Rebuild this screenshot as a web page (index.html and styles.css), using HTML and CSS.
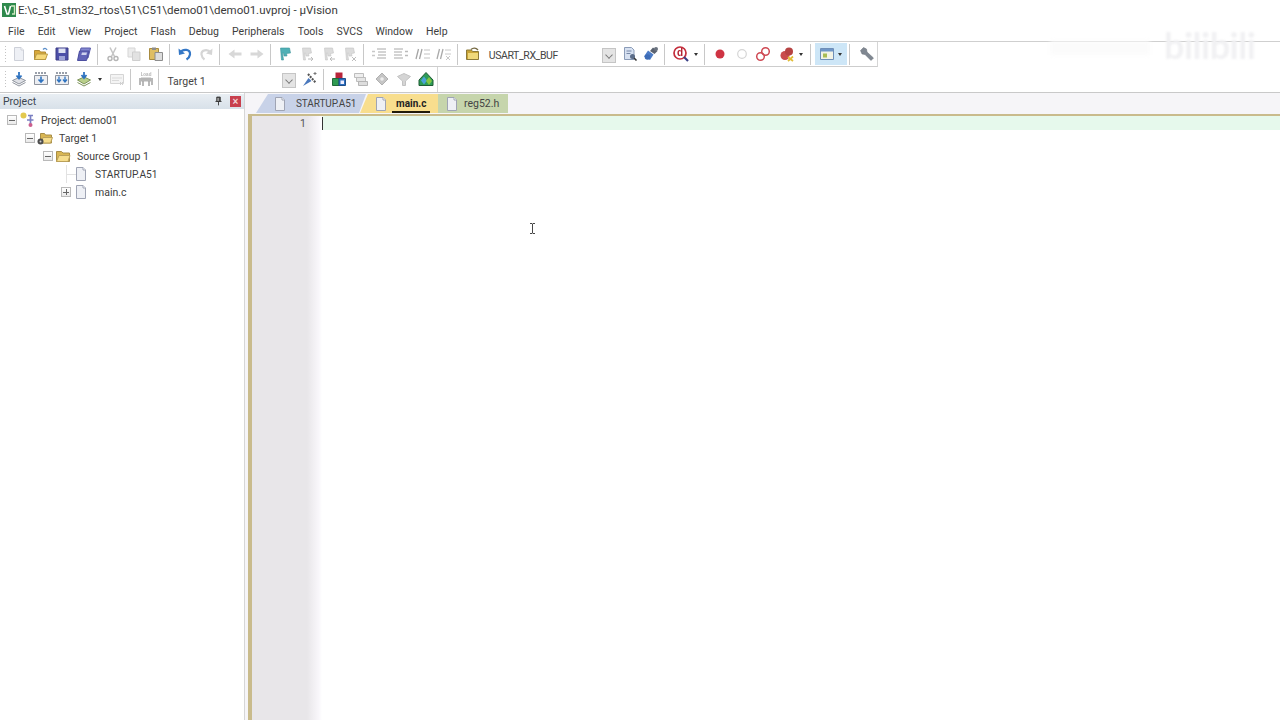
FILE: index.html
```html
<!DOCTYPE html>
<html lang="en">
<head>
<meta charset="utf-8">
<title>demo01 - µVision</title>
<link rel="stylesheet" href="styles.css">
</head>
<body>
<svg class="defs" xmlns="http://www.w3.org/2000/svg">
  <symbol id="doc" viewBox="0 0 16 16"><path d="M3.500 1.500h6.500l2.500 2.500v10.500h-9z" fill="#eef0f5" stroke="currentColor"/><path d="M10 1.500v2.500h2.500" fill="#fff" stroke="currentColor"/></symbol>
  <symbol id="open" viewBox="0 0 16 16"><path d="M1.500 4.500h5l1 1.500h5v7.500h-11z" fill="#d9a93a" stroke="#b08a35"/><path d="M1.500 13.500l2-5.500h11l-2 5.500z" fill="#f6d878" stroke="#b99a45"/><path d="M10 3.500c2-1.800 3.500-1 4 .5" fill="none" stroke="#5b8ec9" stroke-width="1.300"/></symbol>
  <symbol id="save" viewBox="0 0 16 16"><path d="M2 2h12v12H2z" fill="#4c4fa8" stroke="#3c3d86"/><path d="M4.500 2.500h7v4.500h-7z" fill="#dfe2f2"/><path d="M5 10h6v4H5z" fill="#9ea3d8"/></symbol>
  <symbol id="saveall" viewBox="0 0 16 16"><path d="M5 2h9.500l-2.500 10H2.500z" fill="#8387cf" stroke="#5a5cab"/><path d="M3.500 5h9.500l-2.500 9.500H1.500z" fill="#6264b8" stroke="#4d4fa0"/><path d="M6 6.500h5l-.7 2.500h-5z" fill="#cfd2ee"/></symbol>
  <symbol id="cut" viewBox="0 0 16 16"><path d="M5 1.500l4.500 9M11 1.500l-4.500 9" stroke="#c4c4c4" stroke-width="1.500" fill="none"/><circle cx="5" cy="12.500" r="2" fill="none" stroke="#b5b5b5" stroke-width="1.400"/><circle cx="11" cy="12.500" r="2" fill="none" stroke="#b5b5b5" stroke-width="1.400"/></symbol>
  <symbol id="copy" viewBox="0 0 16 16"><path d="M2 2h7v9H2z" fill="#ececec" stroke="#d5d5d5"/><path d="M6.500 6h7.500v8.500H6.500z" fill="#e2e2e2" stroke="#cfcfcf"/></symbol>
  <symbol id="paste" viewBox="0 0 16 16"><path d="M1.500 2.500h9v11h-9z" fill="#dfbe63" stroke="#a88b3f"/><path d="M4 1.500h4v2.500H4z" fill="#8c8c8c"/><path d="M7 6.500h7.500v8H7z" fill="#ddd" stroke="#8d8d8d"/></symbol>
  <symbol id="undo" viewBox="0 0 16 16"><path d="M3.500 6.500C6 2.500 13.500 3 13 8.500c-.3 2.500-2 4-3.500 5" fill="none" stroke="#3477c6" stroke-width="2.200"/><path d="M1.500 2.500l.5 6.500 6-1.500z" fill="#3477c6"/></symbol>
  <symbol id="redo" viewBox="0 0 16 16"><path d="M12.500 6.500C10 3 3 3.500 3.500 8.500c.3 2.500 1.500 4 3 5" fill="none" stroke="#d5d5d5" stroke-width="2.200"/><path d="M14.500 2.500l-.5 6.500-6-1.500z" fill="#d5d5d5"/></symbol>
  <symbol id="back" viewBox="0 0 16 16"><path d="M1.500 8l6-4.500v3h7v3h-7v3z" fill="#d8d8d8"/></symbol>
  <symbol id="fwd" viewBox="0 0 16 16"><path d="M14.500 8l-6-4.500v3h-7v3h7v3z" fill="#d8d8d8"/></symbol>
  <symbol id="flag" viewBox="0 0 16 16"><path d="M3.500 2h9l1 5-4 .5.500 2.500H7l-.5-3H5.500l1 7h-2z" fill="#4fb0b6" stroke="#3e949a" stroke-width=".6"/></symbol>
  <symbol id="flag1" viewBox="0 0 16 16"><path d="M3.500 2h8l1 5-3 .5.500 2.500H7l-.5-3H5.500l1 7h-2z" fill="#dcdcdc" stroke="#c4c4c4" stroke-width=".6"/><path d="M9 13h5M12 11l2 2-2 2" stroke="#bcbcbc" fill="none"/></symbol>
  <symbol id="flag2" viewBox="0 0 16 16"><path d="M3.500 2h8l1 5-3 .5.500 2.500H7l-.5-3H5.500l1 7h-2z" fill="#dcdcdc" stroke="#c4c4c4" stroke-width=".6"/><path d="M14 13H9M11 11l-2 2 2 2" stroke="#bcbcbc" fill="none"/></symbol>
  <symbol id="flag3" viewBox="0 0 16 16"><path d="M3.500 2h8l1 5-3 .5.500 2.500H7l-.5-3H5.500l1 7h-2z" fill="#dcdcdc" stroke="#c4c4c4" stroke-width=".6"/><path d="M10 11l4 4M14 11l-4 4" stroke="#bcbcbc" fill="none"/></symbol>
  <symbol id="indent" viewBox="0 0 16 16"><path d="M6 3h9M7 6h8M7 9h8M6 12h9" stroke="#a8a8a8"/><path d="M1 5.500h3M1 9.500h3" stroke="#c8c8c8" stroke-width="1.500"/></symbol>
  <symbol id="outdent" viewBox="0 0 16 16"><path d="M1 3h9M1 6h8M1 9h8M1 12h9" stroke="#a8a8a8"/><path d="M12 5.500h3M12 9.500h3" stroke="#bbb" stroke-width="1.500"/></symbol>
  <symbol id="comment" viewBox="0 0 16 16"><path d="M3.500 3L1 13M7 3L4.500 13" stroke="#a5a5a5" stroke-width="1.300"/><path d="M9 4h6M9 8h6M9 12h6" stroke="#c2c2c2"/></symbol>
  <symbol id="uncomment" viewBox="0 0 16 16"><path d="M3.500 3L1 13M7 3L4.500 13" stroke="#aaa" stroke-width="1.300"/><path d="M9 4h6M9 8h6" stroke="#c8c8c8"/><path d="M10 10l4 4M14 10l-4 4" stroke="#c8c8c8"/></symbol>
  <symbol id="findfile" viewBox="0 0 16 16"><path d="M1.500 4h5l1 1.500h6v8h-12z" fill="#c9a437" stroke="#8c7a3a"/><path d="M6 3.500c2-2 5-2 7 .5" fill="none" stroke="#776b45" stroke-width="1.300"/><path d="M3 7h10v6H3z" fill="#efd87b"/></symbol>
  <symbol id="finddoc" viewBox="0 0 16 16"><path d="M2.500 1.500h7l2.500 2.500v9.500h-9.500z" fill="#d7e1f1" stroke="#8b9cb8"/><path d="M4.500 5h5M4.500 7.500h4" stroke="#7687a7"/><circle cx="10.500" cy="10.500" r="2.500" fill="#5c6d89"/><path d="M12 12l2.500 2.500" stroke="#333" stroke-width="1.600"/></symbol>
  <symbol id="binoc" viewBox="0 0 16 16"><path d="M1 10.500l4-6 5.500 4-3.500 5.500z" fill="#4c7cc7"/><path d="M7 5l3-3.500 4.500 3.500-3 3z" fill="#5a6270"/><circle cx="4.500" cy="11" r="2.800" fill="#3d6cb6"/><circle cx="13" cy="3" r="2" fill="#6a727f"/></symbol>
  <symbol id="debug" viewBox="0 0 16 16"><circle cx="7" cy="7" r="6" fill="#fff" stroke="#c42c3b" stroke-width="1.700"/><text class="dglyph" x="7" y="10" text-anchor="middle">d</text><path d="M11 11l4 4" stroke="#3a3f86" stroke-width="2.200"/></symbol>
  <symbol id="bp" viewBox="0 0 16 16"><circle cx="8" cy="8" r="4.500" fill="#cf3443"/></symbol>
  <symbol id="bpoff" viewBox="0 0 16 16"><circle cx="8" cy="8" r="4.300" fill="#fff" stroke="#d5d5d5" stroke-width="1.200"/></symbol>
  <symbol id="bpring" viewBox="0 0 16 16"><circle cx="5.500" cy="10.500" r="3.800" fill="none" stroke="#cf4a54" stroke-width="1.500"/><circle cx="10.500" cy="5.500" r="3.800" fill="none" stroke="#cf4a54" stroke-width="1.500"/></symbol>
  <symbol id="bpx" viewBox="0 0 16 16"><circle cx="6" cy="9.500" r="4.500" fill="#c94c4c"/><circle cx="10" cy="5.500" r="4" fill="#b64343"/><path d="M9 11l5 4M14 10.500l-5 4.500" stroke="#e2bd36" stroke-width="1.700"/></symbol>
  <symbol id="win" viewBox="0 0 16 16"><path d="M1.500 2.500h13v11h-13z" fill="#f2f3e6" stroke="#6f8fb8"/><path d="M2 3h12v2.500H2z" fill="#6f96c8"/><path d="M4 7.500h4v4H4z" fill="#a9bd55"/></symbol>
  <symbol id="wrench" viewBox="0 0 16 16"><path d="M1.500 4.500L4.500 1.500 7.500 3l.5 3 6.500 6-2.500 2.500L6 8.500 3 8z" fill="#7f8791" stroke="#666d77" stroke-width=".5"/></symbol>
  <symbol id="t-trans" viewBox="0 0 16 16"><path d="M1.500 9.500l6.500-3 6.500 3-6.500 3.500z" fill="#dfe1e6" stroke="#8f949e"/><path d="M1.500 11.500l6.500 3.500 6.500-3.500" fill="none" stroke="#8f949e"/><path d="M8 1v6M5.500 4.500L8 7.500l2.500-3" fill="none" stroke="#2f73c0" stroke-width="1.800"/></symbol>
  <symbol id="t-build" viewBox="0 0 16 16"><path d="M1.500 4.500h13v9h-13z" fill="#eceef2" stroke="#8f949e"/><path d="M2 2h12" stroke="#9aa0aa" stroke-dasharray="2 1" stroke-width="2"/><path d="M8 5.500v5M5.500 8.500L8 11l2.500-2.500" fill="none" stroke="#2f73c0" stroke-width="1.600"/></symbol>
  <symbol id="t-rebuild" viewBox="0 0 16 16"><path d="M1.500 4.500h13v9h-13z" fill="#eceef2" stroke="#8f949e"/><path d="M2 2h12" stroke="#9aa0aa" stroke-dasharray="2 1" stroke-width="2"/><path d="M5 5.500v5M3 8.500L5 11l2-2.500M11 5.500v5M9 8.500l2 2.500 2-2.500" fill="none" stroke="#2f73c0" stroke-width="1.300"/></symbol>
  <symbol id="t-batch" viewBox="0 0 16 16"><path d="M1.500 9l6.500-3 6.500 3-6.500 4z" fill="#b9cf8a" stroke="#7c9259"/><path d="M1.500 11.500l6.500 3.500 6.500-3.500" fill="none" stroke="#7c9259"/><path d="M8 1v5.500M5.500 4L8 7l2.500-3" fill="none" stroke="#2f73c0" stroke-width="1.800"/></symbol>
  <symbol id="t-stop" viewBox="0 0 16 16"><path d="M1.500 3.500h13v9h-13z" fill="#f4f4f4" stroke="#d5d5d5"/><path d="M3 7h10M3 9.500h7" stroke="#dadada"/><path d="M11 11l3 3M14 11l-3 3" stroke="#cfcfcf"/></symbol>
  <symbol id="t-load" viewBox="0 0 16 16"><text class="loadglyph" x="8" y="4.500" text-anchor="middle">Load</text><path d="M3 6.500h10v4H3z" fill="#b5b5b5"/><path d="M2 7v7M5 10v5M11 10v5M14 7v7" stroke="#a8a8a8" stroke-width="1.600"/></symbol>
  <symbol id="wand" viewBox="0 0 16 16"><path d="M1 15l5.500-8 3 3z" fill="#4a78bd"/><path d="M6 3l8 9" stroke="#555" stroke-width="2" stroke-dasharray="2 1"/><path d="M13 1v3M11.500 2.500h3" stroke="#777"/></symbol>
  <symbol id="manage" viewBox="0 0 16 16"><path d="M4.500 1.500h7v6h-7z" fill="#b8243a"/><path d="M1.500 7.500h6.500v7h-6.500z" fill="#2f9a51" stroke="#1f6a38"/><path d="M8 7.500h6.500v7H8z" fill="#2d6fbf" stroke="#1f4f8a"/><path d="M9.500 9.500h3.500v3.500H9.500z" fill="#eef"/></symbol>
  <symbol id="rows" viewBox="0 0 16 16"><path d="M1.500 2.500h9v4h-9z" fill="#eee" stroke="#bdbdbd"/><path d="M3.500 6.500h9v4h-9z" fill="#e5e5e5" stroke="#bdbdbd"/><path d="M5.500 10.500h9v4h-9z" fill="#ddd" stroke="#b5b5b5"/></symbol>
  <symbol id="diamond" viewBox="0 0 16 16"><path d="M8 2l6 6-6 6-6-6z" fill="#c5c5c5" stroke="#b0b0b0"/><circle cx="8" cy="8" r="1.800" fill="#eee"/></symbol>
  <symbol id="funnel" viewBox="0 0 16 16"><path d="M1.500 5.500L8 2.500l6.500 3L9.500 10v4.500h-3V10z" fill="#d5d5d5" stroke="#c2c2c2"/></symbol>
  <symbol id="packs" viewBox="0 0 16 16"><path d="M1 9L8 1.500 15 9v5.500H1z" fill="#2d9c58" stroke="#1e5a33"/><path d="M3 9.500L6 5.500l3 4-3 4z" fill="#4aa3d9"/><path d="M8 10l3-4 3 4-3 4z" fill="#85c843"/></symbol>
  <symbol id="projico" viewBox="0 0 16 16"><circle cx="4.500" cy="3.500" r="3" fill="#e3c94e"/><path d="M9 3.500h5M11.500 3.500v9.500M8 8h6.500" stroke="#7a7fc2" stroke-width="1.700" fill="none"/><circle cx="11.500" cy="13" r="2" fill="#cc5f8d"/></symbol>
  <symbol id="folder" viewBox="0 0 16 16"><path d="M1.500 3.500h5l1.500 1.500h6.500v8.500h-13z" fill="#d9b653" stroke="#a88d46"/><path d="M1.500 13.500l2.500-6h11l-2 6z" fill="#f6dd8c" stroke="#bba15a"/></symbol>
  <symbol id="target" viewBox="0 0 16 16"><path d="M3.500 3.500h4l1 1.500h6v8h-11z" fill="#d9b653" stroke="#a88d46"/><path d="M4 13l2-5.500h9.500L13.500 13z" fill="#f6dd8c" stroke="#bba15a"/><circle cx="3.500" cy="11.500" r="3" fill="#4d4d4d"/><circle cx="3.500" cy="11.500" r="1" fill="#ccc"/></symbol>
</svg>

<div class="watermark"><span class="wm-faint"></span><span class="wm-logo">bilibili</span></div>
<svg class="ibeam" viewBox="0 0 7 11" aria-hidden="true"><path d="M1 .5h2l.5.5.5-.5h2M3.500 1v9M1 10.500h2l.5-.5.5.5h2" fill="none" stroke="#333" stroke-width=".9"/></svg>

<header class="titlebar">
  <svg class="appicon" viewBox="0 0 14 14"><path d="M0 0h14v14H0z" fill="#2f8a4d"/><path d="M2.500 3l2.500 8h1.500L8.500 3" fill="none" stroke="#fff" stroke-width="1.600"/><path d="M9 3h3.500v8H10" fill="none" stroke="#cfe8c0" stroke-width="1.400"/></svg>
  <span class="title">E:\c_51_stm32_rtos\51\C51\demo01\demo01.uvproj - µVision</span>
</header>

<nav class="menubar">
  <span>File</span><span>Edit</span><span>View</span><span>Project</span><span>Flash</span><span>Debug</span><span>Peripherals</span><span>Tools</span><span>SVCS</span><span>Window</span><span>Help</span>
</nav>

<div class="tools">
  <div class="toolbar tb-1">
    <i class="grip"></i>
    <b class="t"><svg><use href="#doc"/></svg></b><b class="t"><svg><use href="#open"/></svg></b><b class="t"><svg><use href="#save"/></svg></b><b class="t"><svg><use href="#saveall"/></svg></b><i class="sep"></i>
    <b class="t"><svg><use href="#cut"/></svg></b><b class="t"><svg><use href="#copy"/></svg></b><b class="t"><svg><use href="#paste"/></svg></b><i class="sep"></i>
    <b class="t"><svg><use href="#undo"/></svg></b><b class="t"><svg><use href="#redo"/></svg></b><i class="sep"></i>
    <b class="t"><svg><use href="#back"/></svg></b><b class="t"><svg><use href="#fwd"/></svg></b><i class="sep"></i>
    <b class="t"><svg><use href="#flag"/></svg></b><b class="t"><svg><use href="#flag1"/></svg></b><b class="t"><svg><use href="#flag2"/></svg></b><b class="t"><svg><use href="#flag3"/></svg></b><i class="sep"></i>
    <b class="t"><svg><use href="#indent"/></svg></b><b class="t"><svg><use href="#outdent"/></svg></b><b class="t"><svg><use href="#comment"/></svg></b><b class="t"><svg><use href="#uncomment"/></svg></b><i class="sep"></i>
    <b class="t"><svg><use href="#findfile"/></svg></b>
    <span class="combo combo-find"><span class="combo-text caps">USART_RX_BUF</span><i class="combo-btn"></i></span>
    <b class="t"><svg><use href="#finddoc"/></svg></b><b class="t"><svg><use href="#binoc"/></svg></b><i class="sep"></i>
    <b class="t drop drop-debug"><svg><use href="#debug"/></svg><i class="caret"></i></b><i class="sep"></i>
    <b class="t"><svg><use href="#bp"/></svg></b><b class="t"><svg><use href="#bpoff"/></svg></b><b class="t"><svg><use href="#bpring"/></svg></b>
    <b class="t drop"><svg><use href="#bpx"/></svg><i class="caret"></i></b><i class="sep"></i>
    <b class="t drop active"><svg><use href="#win"/></svg><i class="caret"></i></b><i class="sep sep-last"></i>
    <b class="t"><svg><use href="#wrench"/></svg></b>
  </div>
  <div class="toolbar tb-2">
    <i class="grip"></i>
    <b class="t"><svg><use href="#t-trans"/></svg></b><b class="t"><svg><use href="#t-build"/></svg></b><b class="t"><svg><use href="#t-rebuild"/></svg></b>
    <b class="t drop-sm"><svg><use href="#t-batch"/></svg><i class="caret"></i></b>
    <b class="t"><svg><use href="#t-stop"/></svg></b><i class="sep"></i>
    <b class="t"><svg><use href="#t-load"/></svg></b><i class="sep"></i>
    <span class="combo combo-target"><span class="combo-text">Target 1</span><i class="combo-btn"></i></span>
    <b class="t"><svg><use href="#wand"/></svg></b><i class="sep"></i>
    <b class="t"><svg><use href="#manage"/></svg></b><b class="t"><svg><use href="#rows"/></svg></b><b class="t"><svg><use href="#diamond"/></svg></b><b class="t"><svg><use href="#funnel"/></svg></b><b class="t"><svg><use href="#packs"/></svg></b>
  </div>
</div>

<main class="workspace">
  <aside class="panel">
    <div class="panel-head">
      <span class="panel-title">Project</span>
      <svg class="pin" viewBox="0 0 8 10"><path d="M2 .5h4v5H2zM.5 5.500h7M4 6v4" fill="#555" stroke="#333"/><path d="M3 1.500h1v3.500H3z" fill="#ddd"/></svg>
      <span class="close">×</span>
    </div>
    <ul class="tree">
      <li class="row l0"><i class="exp minus"></i><svg class="ti"><use href="#projico"/></svg><span>Project: demo01</span></li>
      <li class="row l1"><i class="exp minus"></i><svg class="ti"><use href="#target"/></svg><span>Target 1</span></li>
      <li class="row l2"><i class="exp minus"></i><svg class="ti"><use href="#folder"/></svg><span>Source Group 1</span></li>
      <li class="row l3"><i class="exp none"></i><svg class="ti"><use href="#doc"/></svg><span class="caps-tree">STARTUP.A51</span></li>
      <li class="row l3"><i class="exp plus"></i><svg class="ti"><use href="#doc"/></svg><span>main.c</span></li>
    </ul>
  </aside>
  <section class="editor">
    <div class="tabs">
      <div class="tab tab-blue"><svg><use href="#doc"/></svg><span class="caps-tab">STARTUP.A51</span></div>
      <div class="tab tab-yellow"><svg><use href="#doc"/></svg><span class="current">main.c</span></div>
      <div class="tab tab-green"><svg><use href="#doc"/></svg><span>reg52.h</span></div>
    </div>
    <div class="code">
      <div class="gutter"><span class="lineno">1</span></div>
      <div class="lines"><div class="line-current"><i class="cursor"></i></div></div>
    </div>
  </section>
</main>
</body>
</html>
```
FILE: styles.css
```css
* { box-sizing: border-box; }
html, body { margin: 0; height: 720px; overflow: hidden; }
body {
  background: #fff;
  color: #333;
  font-family: Roboto, "Liberation Sans", sans-serif;
  font-size: 10.5px;
  display: flex;
  flex-direction: column;
  position: relative;
}
.defs { display: none; }
.dglyph { font: bold 10px "Liberation Sans", sans-serif; fill: #b3202f; }
.loadglyph { font: bold 4.5px "Liberation Sans", sans-serif; fill: #b5b5b5; }
.caps { letter-spacing: -.4px; }
.caps-tree { font-size: 10.2px; }
.caps-tab { font-size: 10px; letter-spacing: -.1px; }

.titlebar { height: 21px; display: flex; align-items: center; padding: 0 0 1px 2px; flex: none; }
.appicon { width: 14px; height: 14px; margin-right: 2px; }
.title { font-size: 11.5px; color: #3a3a3a; white-space: nowrap; }

.menubar { height: 20px; display: flex; align-items: center; padding-left: 1.5px; flex: none; }
.menubar span { padding: 0 6.55px; color: #3d3d3d; }

.tools { flex: none; border-top: 1px solid #cfcfcf; border-bottom: 1px solid #c9c9c9; height: 52px; display: flex; flex-direction: column; }
.toolbar { display: flex; align-items: center; height: 25px; border-bottom: 1px solid #cdcdcd; border-right: 1px solid #d5d5d5; padding-left: 4px; }
.tb-1 { width: 878px; }
.tb-2 { width: 438px; border-bottom: 0; padding-bottom: 1px; }
.grip { width: 4px; height: 19px; background-image: radial-gradient(#c4c4c4 40%, transparent 45%); background-size: 3px 3px; flex: none; }
.t { flex: none; width: 21.7px; height: 22px; display: flex; align-items: center; justify-content: center; position: relative; font-weight: normal; color: #cdd0d8; }
.t svg { width: 16px; height: 16px; filter: blur(.25px); }
.sep { flex: none; width: 7px; height: 21px; position: relative; }
.sep::after { content: ""; position: absolute; left: 2px; top: 0; bottom: 0; width: 1px; background: #c8c8c8; }
.sep-last { width: 9px; }
.drop { width: 34px; justify-content: flex-start; padding-left: 5px; }
.drop-debug { width: 33px; padding-left: 4px; }
.drop-debug .caret { right: 4px; }
.drop-sm { width: 33px; justify-content: flex-start; padding-left: 3px; }
.drop-sm .caret { right: 4px; }
.caret { position: absolute; right: 5px; top: 10px; border: 2.5px solid transparent; border-top: 3px solid #333; border-bottom: 0; }
.active { background: #cde6f7; width: 32px; padding-left: 4px; }
.combo { flex: none; height: 20px; display: flex; align-items: center; justify-content: space-between; color: #444; }
.combo-find { width: 135px; padding-left: 5px; padding-right: 3px; }
.combo-target { width: 136px; padding-left: 4px; padding-right: 3px; }
.combo-text { white-space: nowrap; padding-top: 2px; }
.combo-target .combo-text { padding-top: 4px; }
.combo-btn { width: 14px; height: 15px; margin-top: 2px; background: #e4e4e4; border: 1px solid #c5c5c5; position: relative; }
.combo-btn::after { content: ""; position: absolute; left: 3px; top: 3px; width: 5px; height: 5px; border-right: 1px solid #777; border-bottom: 1px solid #777; transform: rotate(45deg) scale(.9); }

.workspace { flex: 1; display: flex; min-height: 0; background: #f6f5f8; }
.panel { width: 245px; flex: none; background: #fff; border-right: 1px solid #d6d6d6; padding-top: 1px; display: flex; flex-direction: column; }
.panel-head { height: 15px; background: linear-gradient(#e9eef3, #d8e1e9); display: flex; align-items: center; padding: 0 3px 1px; flex: none; }
.panel-title { flex: 1; color: #3c4650; }
.pin { width: 7px; height: 10px; margin-right: 8px; }
.close { width: 11px; height: 11px; background: #c8404e; color: #f2d5d8; font: bold 10px/11px "Liberation Sans", sans-serif; text-align: center; }
.tree { list-style: none; margin: 2px 0 0; padding: 0; }
.row { height: 18px; display: flex; align-items: center; white-space: nowrap; color: #3d3d3d; }
.l0 { padding-left: 7px; }
.l1 { padding-left: 25px; }
.l2 { padding-left: 43px; }
.l3 { padding-left: 61px; }
.exp { flex: none; width: 10px; height: 10px; margin-right: 2px; border: 1px solid #b9b9b9; background: linear-gradient(#fff, #e9e9e9); position: relative; }
.exp.none { border: 0; background: none; }
.exp.none::before { content: ""; position: absolute; left: 5px; top: -4px; height: 18px; width: 1px; background: #e2e2e2; }
.exp.none::after { content: ""; position: absolute; left: 5px; top: 5px; width: 11px; height: 1px; background: #e2e2e2; }
.exp.minus::after, .exp.plus::after { content: ""; position: absolute; left: 1px; right: 1px; top: 3.5px; height: 1px; background: #666; }
.exp.plus::before { content: ""; position: absolute; top: 1px; bottom: 1px; left: 3.5px; width: 1px; background: #666; }
.ti { flex: none; width: 16px; height: 16px; margin-right: 6px; filter: blur(.25px); color: #9fa4b4; }

.editor { flex: 1; min-width: 0; display: flex; flex-direction: column; margin-left: 3px; }
.tabs { height: 21px; display: flex; align-items: stretch; padding-left: 8px; flex: none; padding-top: 1px; }
.tab { display: flex; align-items: center; height: 19px; color: #444; }
.tab svg { width: 16px; height: 16px; flex: none; color: #9fa4b4; }
.tab-blue { width: 110px; padding-left: 16px; gap: 8px; background: #c8d2e8; clip-path: polygon(12px 0, 100% 0, calc(100% - 7px) 100%, 0 100%); }
.tab-yellow { width: 78px; margin-left: -6px; padding-left: 13px; gap: 3px; background: #f8de8e; clip-path: polygon(8px 0, 100% 0, 100% 100%, 0 100%); }
.tab-green { width: 70px; padding-left: 6px; gap: 4px; background: #c6d5ac; }
.current { font-weight: 700; font-size: 10px; color: #222; border-bottom: 2px solid #221a08; padding: 2px 4px 0; line-height: 14px; }
.code { flex: 1; display: flex; min-height: 0; border-left: 4px solid #c9bb8c; border-top: 2px solid #c9bb8c; background: #fff; }
.gutter { flex: none; width: 70px; background: linear-gradient(90deg, #e8e6e9 0, #e8e6e9 55px, #f9f7fb 67px, #fff 70px); text-align: right; padding-right: 16px; }
.lineno { font: 10.5px/15px Roboto, sans-serif; color: #555; }
.lines { flex: 1; min-width: 0; }
.line-current { height: 14px; background: #e6f9ec; position: relative; }
.cursor { position: absolute; left: 0; top: 1px; width: 1px; height: 13px; background: #333; }

.watermark { position: absolute; left: 1050px; top: 20px; width: 215px; height: 50px; display: flex; align-items: center; gap: 14px; pointer-events: none; }
.wm-faint { width: 100px; height: 14px; background: #fbfbfb; filter: blur(2px); margin-top: 6px; }
.wm-logo { font: 700 36px/40px "Lato", "Liberation Sans", sans-serif; color: #f1f1f3; filter: blur(1px); letter-spacing: -.5px; }
.ibeam { position: absolute; left: 529px; top: 223px; width: 7px; height: 11px; }
```
